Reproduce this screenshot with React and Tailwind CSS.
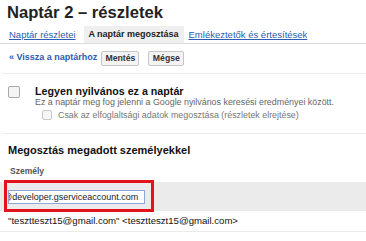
export default function App() {
  return (
    <div className="w-[366px] h-[241px] overflow-hidden bg-white text-[#222]" style={{ fontFamily: '"Liberation Sans", Arial, sans-serif' }}>
      <div className="pl-[7px] pt-[3px] h-[23px] text-[16.6px] leading-[20px] font-bold text-[#222]">Naptár 2 – részletek</div>
      <div className="mt-[3px] h-[18px] border-b border-[#dcdcdc] flex items-stretch text-[9.5px] leading-[17px]">
        <a className="ml-[9px] text-[#2a5db0] underline">Naptár részletei</a>
        <div className="ml-[8px] w-[100px] bg-[#efefef] flex justify-center font-bold text-[9px] text-[#222]">A naptár megosztása</div>
        <a className="ml-[5px] text-[#2a5db0] underline">Emlékeztetők és értesítések</a>
      </div>
      <div className="mt-[6px] flex items-center h-[16px]">
        <a className="ml-[9px] text-[9px] font-bold text-[#2a5db0]">« Vissza a naptárhoz</a>
        <button className="ml-[4px] h-[15px] w-[38px] rounded-[2px] border border-[#c6c6c6] bg-[#f3f3f3] text-[8.7px] font-bold text-[#333] leading-[13px]">Mentés</button>
        <button className="ml-[9px] h-[15px] w-[36px] rounded-[2px] border border-[#c6c6c6] bg-[#f3f3f3] text-[8.7px] font-bold text-[#333] leading-[13px]">Mégse</button>
      </div>
      <div className="mt-[7px] ml-[3px] border-t border-[#ebebeb]" />
      <div className="mt-[11px] flex">
        <div className="ml-[8px] mt-[1px] w-[12px] h-[12px] rounded-[2px] border border-[#a8a8a8] bg-[#f4f4f4]" />
        <div className="ml-[15px]">
          <div className="text-[10.7px] leading-[12px] font-bold text-[#111]">Legyen nyilvános ez a naptár</div>
          <div className="text-[8.9px] leading-[10px] text-[#666]">Ez a naptár meg fog jelenni a Google nyilvános keresési eredményei között.</div>
        </div>
      </div>
      <div className="mt-[2px] flex items-center">
        <div className="ml-[42px] w-[10px] h-[10px] rounded-[2px] border border-[#c8c8c8] bg-[#f6f6f6]" />
        <div className="ml-[6px] text-[8.9px] leading-[12px] text-[#777]">Csak az elfoglaltsági adatok megosztása (részletek elrejtése)</div>
      </div>
      <div className="mt-[12px] ml-[3px] border-t border-[#ebebeb]" />
      <div className="mt-[10px] ml-[8px] text-[11px] leading-[13px] font-bold text-[#111]">Megosztás megadott személyekkel</div>
      <div className="mt-[9px] ml-[10px] text-[8.5px] leading-[10px] font-bold text-[#555]">Személy</div>
      <div className="mt-[6px] relative h-[29px] bg-[#ebebeb]">
        <div className="absolute left-[4px] top-[-2px] w-[150px] h-[32px] border-[3px] border-[#e3121b]" />
        <div className="absolute left-[8px] top-[8px] w-[137px] h-[14px] bg-white border border-[#8ea6d8] overflow-hidden">
          <div className="whitespace-nowrap text-[9px] leading-[12px] text-[#222] ml-[-6px]">@developer.gserviceaccount.com</div>
        </div>
      </div>
      <div className="h-[21px] border-b border-[#ebebeb] flex items-center">
        <div className="ml-[8px] text-[9.6px] text-[#111]">"tesztteszt15@gmail.com" &lt;tesztteszt15@gmail.com&gt;</div>
      </div>
    </div>
  );
}
